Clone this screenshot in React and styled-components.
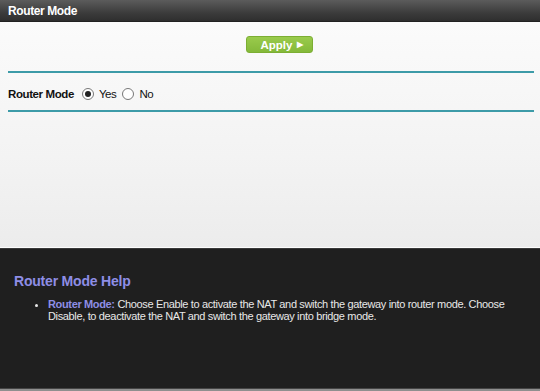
import React from "react";
import styled, { createGlobalStyle } from "styled-components";

const Global = createGlobalStyle`
  html, body { margin: 0; padding: 0; }
  body { font-family: "Liberation Sans", Arial, sans-serif; background: #1f1f1f; }
`;

const Page = styled.div`
  width: 540px;
  height: 391px;
  display: flex;
  flex-direction: column;
  overflow: hidden;
`;

const TitleBar = styled.div`
  height: 21px;
  flex: none;
  background: linear-gradient(#5c5c5c, #3c3c3c 60%, #2e2e2e);
  border-bottom: 1px solid #222;
  display: flex;
  align-items: center;
  padding-left: 8px;
  color: #fff;
  font-weight: bold;
  font-size: 12px;
  letter-spacing: -0.4px;
`;

const Body = styled.div`
  height: 226px;
  flex: none;
  background: linear-gradient(#fbfbfb, #f3f3f3 60%, #ececec);
  padding: 14px 6px 0 8px;
  box-sizing: border-box;
  border-bottom: 1px solid #fdfdfd;
`;

const ButtonRow = styled.div`
  display: flex;
  justify-content: center;
  padding-left: 16px;
  height: 17px;
`;

const ApplyButton = styled.button`
  width: 67px;
  height: 17px;
  border: 1px solid #7cae33;
  border-radius: 3px;
  background: linear-gradient(#9acb4c, #84b93a);
  color: #fff;
  font-family: "Liberation Sans", Arial, sans-serif;
  font-weight: bold;
  font-size: 11.5px;
  padding: 0 0 0 6px;
  display: flex;
  align-items: center;
  justify-content: center;
  gap: 5px;
`;

const Arrow = styled.span`
  font-size: 8px;
`;

const Rule = styled.div`
  height: 2px;
  background: #3d9ba8;
  margin-top: ${(p) => p.$top}px;
`;

const FieldRow = styled.div`
  display: flex;
  align-items: center;
  height: 33px;
  padding-top: 4px;
  font-size: 11.5px;
  letter-spacing: -0.4px;
  color: #111;
`;

const Label = styled.span`
  font-weight: bold;
  margin-right: 8px;
`;

const Radio = styled.span`
  width: 10px;
  height: 10px;
  border: 1px solid #777;
  border-radius: 50%;
  background: #fff;
  display: inline-flex;
  align-items: center;
  justify-content: center;
  margin-right: 5px;
  &::after {
    content: "";
    width: 6px;
    height: 6px;
    border-radius: 50%;
    background: ${(p) => (p.$on ? "#222" : "transparent")};
  }
`;

const Option = styled.span`
  margin-right: 6px;
`;

const Help = styled.div`
  flex: 1;
  background: #1f1f1f;
  border-top: 1px solid #3a3a3a;
  padding: 24px 14px 0;
  box-sizing: border-box;
`;

const HelpTitle = styled.h2`
  margin: 0;
  color: #8e8ee6;
  font-size: 14px;
  letter-spacing: -0.2px;
  font-weight: bold;
`;

const List = styled.ul`
  margin: 9px 0 0;
  padding-left: 34px;
  color: #e8e8e8;
  font-size: 11px;
  letter-spacing: -0.35px;
  line-height: 12px;
`;

const Term = styled.span`
  color: #8e8ee6;
  font-weight: bold;
`;

const Footer = styled.div`
  height: 2px;
  flex: none;
  background: #8f8f8f;
  border-top: 1px solid #444;
`;

export default function App() {
  return (
    <Page>
      <Global />
      <TitleBar>Router Mode</TitleBar>
      <Body>
        <ButtonRow>
          <ApplyButton>
            Apply <Arrow>▶</Arrow>
          </ApplyButton>
        </ButtonRow>
        <Rule $top={18} />
        <FieldRow>
          <Label>Router Mode</Label>
          <Radio $on />
          <Option>Yes</Option>
          <Radio />
          <Option>No</Option>
        </FieldRow>
        <Rule $top={0} />
      </Body>
      <Help>
        <HelpTitle>Router Mode Help</HelpTitle>
        <List>
          <li>
            <Term>Router Mode:</Term> Choose Enable to activate the NAT and switch the gateway into
            router mode. Choose Disable, to deactivate the NAT and switch the gateway into bridge
            mode.
          </li>
        </List>
      </Help>
      <Footer />
    </Page>
  );
}
